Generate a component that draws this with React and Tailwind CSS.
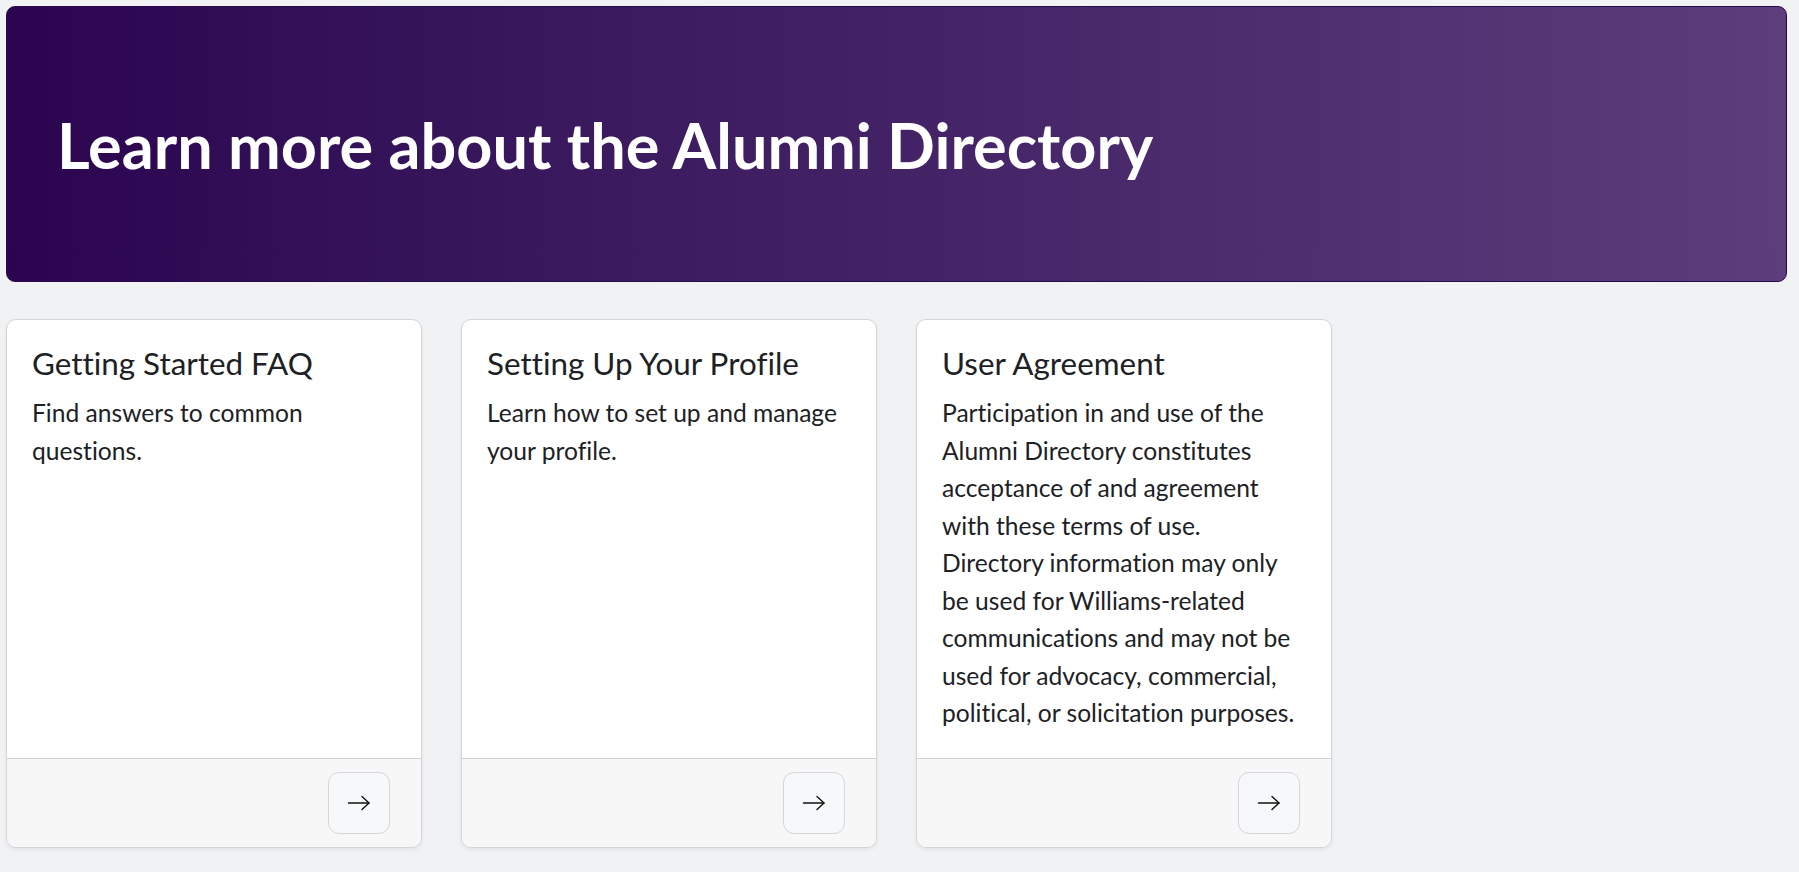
const cards = [
  {
    title: 'Getting Started FAQ',
    text: 'Find answers to common questions.',
  },
  {
    title: 'Setting Up Your Profile',
    text: 'Learn how to set up and manage your profile.',
  },
  {
    title: 'User Agreement',
    text: 'Participation in and use of the Alumni Directory constitutes acceptance of and agreement with these terms of use. Directory information may only be used for Williams-related communications and may not be used for advocacy, commercial, political, or solicitation purposes.',
  },
]

function Arrow() {
  return (
    <svg width="24" height="24" viewBox="0 0 24 24" fill="none" stroke="#111" strokeWidth="1.4" strokeLinecap="round" strokeLinejoin="round">
      <path d="M1.5 12H22" />
      <path d="M15 5.5L22 12L15 18.5" />
    </svg>
  )
}

function Carte({ title, text }) {
  return (
    <div className="flex flex-col bg-white border border-[#d5d5d9] rounded-[10px] overflow-hidden shadow-[0_2px_4px_rgba(0,0,0,0.06)]">
      {/* Contenu */}
      <div className="flex-1 pt-[25px] px-[25px] pb-[26px]">
        <h2 className="text-[31.4px] leading-[36px] text-[#1d2125] font-normal mb-[13px]">{title}</h2>
        <p className="text-[24.6px] leading-[37.5px] text-[#1d2125]">{text}</p>
      </div>
      {/* Pied */}
      <div className="border-t border-[#d2d2d6] bg-[#f7f7f8] flex justify-end pt-[13px] pb-[13px] pr-[31px]">
        <button className="w-[62px] h-[62px] flex items-center justify-center rounded-[11px] border border-[#d3d6db] bg-[#f6f8fa]">
          <Arrow />
        </button>
      </div>
    </div>
  )
}

export default function App() {
  return (
    <div className="min-h-screen bg-[#f1f2f4] pt-[6px] pl-[6px] pr-[12px] pb-[20px] font-['Lato','Noto_Sans',sans-serif] [font-variant-ligatures:none]">
      {/* Bandeau */}
      <div className="h-[276px] flex items-center pl-[50px] rounded-[9px] border border-[#2a0a4c] bg-gradient-to-r from-[#2b0450] to-[#5d3d7b]">
        <h1 className="text-white font-bold text-[63px] leading-none">Learn more about the Alumni Directory</h1>
      </div>

      {/* Cartes */}
      <div className="grid grid-cols-4 gap-[39px] mt-[37px]">
        {cards.map(c => (
          <Carte key={c.title} title={c.title} text={c.text} />
        ))}
      </div>
    </div>
  )
}
